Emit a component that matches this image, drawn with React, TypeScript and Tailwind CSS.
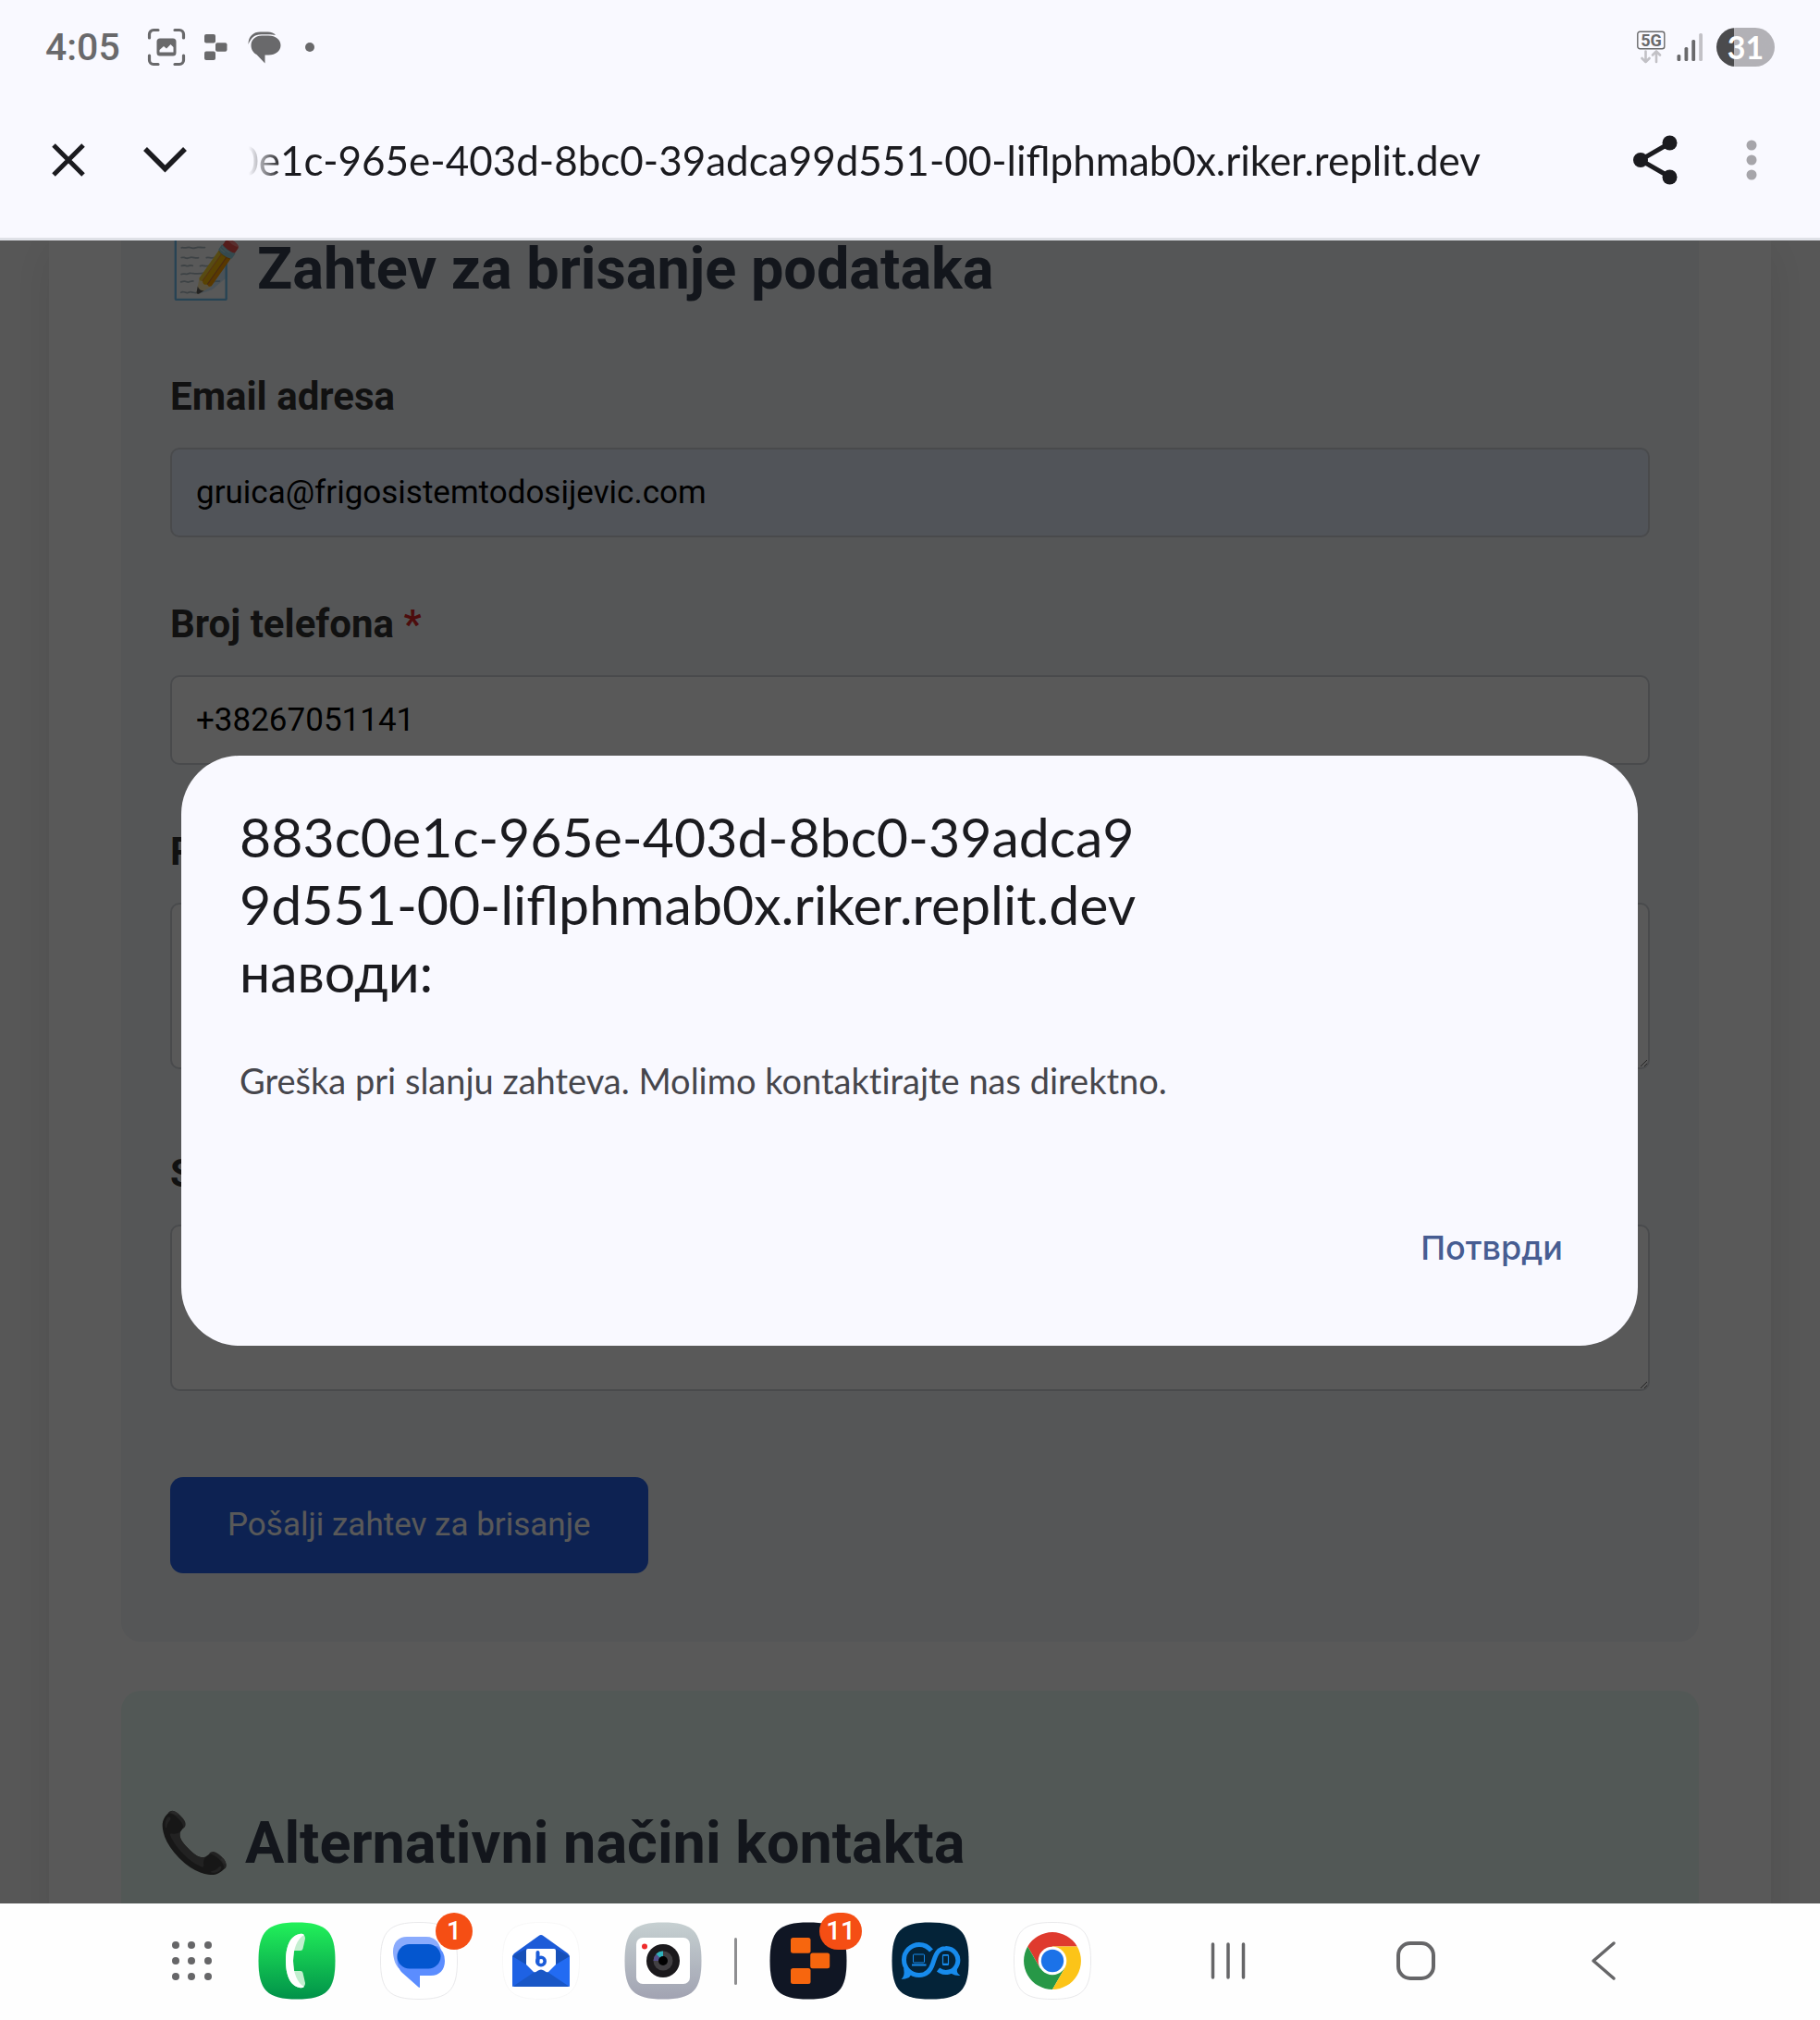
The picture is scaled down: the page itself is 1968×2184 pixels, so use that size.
import type { ReactNode } from "react";

const SQUIRCLE =
  "M42 .5C74 .5 83.500 10 83.500 42C83.500 74 74 83.500 42 83.500C10 83.500 .5 74 .5 42C.5 10 10 .5 42 .5Z";

function StatusBar() {
  return (
    <div className="flex h-[102px] items-center pr-[49px] pl-[49px] text-[#69696b]">
      <span className="font-[Roboto,sans-serif] text-[41px] leading-none font-medium">4:05</span>
      <svg className="ml-[29px] size-[42px]" viewBox="0 0 42 42" fill="none">
        <path
          d="M2.500 11V7A4.500 4.500 0 0 1 7 2.500H12M30 2.500H35A4.500 4.500 0 0 1 39.500 7V11M39.500 30V35A4.500 4.500 0 0 1 35 39.500H30M12 39.500H7A4.500 4.500 0 0 1 2.500 35V30"
          stroke="currentColor"
          strokeWidth="3.200"
          strokeLinecap="round"
        />
        <rect x="10.500" y="11.500" width="21" height="19" rx="3.500" fill="currentColor" />
        <path d="M13.500 26.500V24L18 20L21 22.500L25.500 18L28.500 21V26.500Z" fill="#f9f9ff" />
      </svg>
      <svg className="ml-[20px] h-[28px] w-[25px]" viewBox="0 0 25 28" fill="currentColor">
        <rect width="12" height="9.500" rx="2" />
        <rect x="12" y="9.300" width="12.500" height="9.500" rx="2" />
        <rect y="18.500" width="12" height="9.500" rx="2" />
      </svg>
      <svg className="ml-[22px] h-[35px] w-[36px]" viewBox="0 0 36 35" fill="currentColor">
        <path d="M15 4.500H22.500C30 4.500 35.500 9 35.500 15S30 25.500 22.500 25.500H18.500V34.500L9.500 25C5.500 23 3.500 19 3.500 15C3.500 9 8.500 4.500 15 4.500Z" />
        <path d="M.5 14C.5 5 6 .5 13.500 .5H21.500C25.500 .5 28.500 2 30 4C27 3 24 3.200 14.500 3.200C7 3.200 3.500 7 .5 14Z" />
      </svg>
      <span className="ml-[26px] size-[10px] rounded-full bg-current" />

      <svg className="ml-auto h-[36px] w-[31px]" viewBox="0 0 31 36" fill="none">
        <rect x=".8" y="1.300" width="29" height="18.500" rx="2.500" stroke="currentColor" strokeWidth="1.400" />
        <text
          x="15.500"
          y="17"
          textAnchor="middle"
          fontFamily="Roboto, sans-serif"
          fontSize="18"
          fontWeight="700"
          fill="currentColor"
        >
          5G
        </text>
        <path
          d="M9.500 22.500V34M5.500 30L9.500 34L13.500 30M21 34V22.500M17 26.500L21 22.500L25 26.500"
          stroke="#c2c1c6"
          strokeWidth="2.600"
          strokeLinecap="round"
          strokeLinejoin="round"
        />
      </svg>
      <svg className="ml-[12px] h-[30px] w-[29px]" viewBox="0 0 29 30" fill="currentColor">
        <rect x=".5" y="23" width="3.800" height="7" rx="1.500" />
        <rect x="8.500" y="15" width="3.800" height="15" rx="1.500" />
        <rect x="16.300" y="7" width="3.800" height="23" rx="1.500" />
        <rect x="24.200" width="3.800" height="30" rx="1.500" fill="#c2c1c6" />
      </svg>
      <span className="ml-[14px] flex h-[42px] w-[63px] items-center justify-center rounded-full bg-linear-to-r from-[#4b4b4d] from-30% to-[#b2b1b6] to-30% text-[34px] leading-none font-bold text-white">
        31
      </span>
    </div>
  );
}

function AddressBar() {
  return (
    <div className="flex h-[142px] items-center pr-[67px] pl-[56px] text-[#1b1b1f]">
      <button type="button" aria-label="Затвори" className="flex size-[36px]">
        <svg viewBox="0 0 36 36" fill="none" stroke="currentColor" strokeWidth="5">
          <path d="M2 2L34 34M34 2L2 34" />
        </svg>
      </button>
      <button type="button" aria-label="Умањи" className="ml-[63px] flex h-[28px] w-[47px]">
        <svg viewBox="0 0 47 28" fill="none" stroke="currentColor" strokeWidth="5.500">
          <path d="M2 2L23.500 23.500L45 2" />
        </svg>
      </button>
      <div className="ml-[66px] flex min-w-0 flex-1 justify-end overflow-hidden mask-l-from-[1296px] mask-l-to-[1332px]">
        <span className="text-[44px] leading-[60px] whitespace-nowrap">
          883c0e1c-965e-403d-8bc0-39adca99d551-00-liflphmab0x.riker.replit.dev
        </span>
      </div>
      <button type="button" aria-label="Дели" className="ml-[165px] flex h-[54px] w-[48px]">
        <svg viewBox="0 0 48 54" fill="currentColor">
          <path d="M40 8.500L8 27L40 45.500" fill="none" stroke="currentColor" strokeWidth="5" />
          <circle cx="39.500" cy="8.500" r="8" />
          <circle cx="8" cy="27" r="8" />
          <circle cx="39.500" cy="45.500" r="8" />
        </svg>
      </button>
      <button type="button" aria-label="Још опција" className="ml-[73px] flex h-[44px] w-[14px]">
        <svg viewBox="0 0 14 44" fill="#a6a5aa">
          <circle cx="7" cy="6" r="5.500" />
          <circle cx="7" cy="22" r="5.500" />
          <circle cx="7" cy="38" r="5.500" />
        </svg>
      </button>
    </div>
  );
}

const labelClass = "mb-[22px] block text-[42px] leading-[67px] font-bold text-[#333333]";
const inputClass =
  "mb-[60px] block h-[97px] w-full rounded-[10px] border-2 border-[#d1d5db] px-[26px] text-[35px] text-black";
const areaClass =
  "block h-[180px] w-full rounded-[10px] border-2 border-[#d1d5db] bg-white px-[26px] py-[20px] text-[35px] text-black";
const headingClass = "text-[63px] leading-[62px] font-bold text-[#374151]";

function DeletionPage() {
  return (
    <div className="bg-[#fafafa] px-[53px] font-[Roboto,'Noto_Color_Emoji',sans-serif]">
      <div className="bg-white px-[78px] shadow-[0_5px_50px_rgba(0,0,0,0.1)]">
        <section className="rounded-b-[21px] bg-[#f3f6f9] px-[53px] pb-[74px]">
          <h2 className={`${headingClass} mb-[73px]`}>📝 Zahtev za brisanje podataka</h2>
          <form onSubmit={(e) => e.preventDefault()}>
            <label htmlFor="email" className={labelClass}>
              Email adresa
            </label>
            <input
              id="email"
              type="email"
              defaultValue="gruica@frigosistemtodosijevic.com"
              className={`${inputClass} bg-[#e8f0fe]`}
            />
            <label htmlFor="phone" className={labelClass}>
              Broj telefona <span className="text-[#dc2626]">*</span>
            </label>
            <input id="phone" type="tel" defaultValue="+38267051141" className={`${inputClass} bg-white`} />
            <label htmlFor="reason" className={labelClass}>
              Razlog
            </label>
            <textarea id="reason" className={`${areaClass} mb-[79px]`} />
            <label htmlFor="details" className={labelClass}>
              Stavke
            </label>
            <textarea id="details" className={`${areaClass} mb-[93px]`} />
            <button
              type="submit"
              className="h-[104px] rounded-[14px] bg-[#2563eb] px-[62px] text-[35px] text-white"
            >
              Pošalji zahtev za brisanje
            </button>
          </form>
        </section>
        <section className="mt-[53px] rounded-t-[21px] bg-[#ecfdf5] px-[40px] pt-[134px] pb-[80px]">
          <h2 className={headingClass}>📞 Alternativni načini kontakta</h2>
        </section>
      </div>
    </div>
  );
}

function AlertDialog() {
  return (
    <div className="absolute inset-0 flex items-center bg-black/65 pr-[197px] pb-[46px] pl-[196px]">
      <div
        role="alertdialog"
        aria-labelledby="alert-title"
        aria-describedby="alert-text"
        className="flex w-full flex-col rounded-[63px] bg-[#f9f9ff] px-[63px] pt-[51px] pb-[61px]"
      >
        <h1 id="alert-title" className="text-[59px] leading-[73px] text-[#1b1b1f]">
          883c0e1c-965e-403d-8bc0-39adca9
          <br />
          9d551-00-liflphmab0x.riker.replit.dev
          <br />
          наводи:
        </h1>
        <p
          id="alert-text"
          className="mt-[55px] text-[38px] leading-[52px] text-[#46464c] [font-variant-ligatures:none]"
        >
          Greška pri slanju zahteva. Molimo kontaktirajte nas direktno.
        </p>
        <button
          type="button"
          className="mt-[110px] mr-[18px] h-[90px] self-end font-[Inter,sans-serif] text-[36px] leading-[52px] font-medium text-[#475d92]"
        >
          Потврди
        </button>
      </div>
    </div>
  );
}

function AppButton({ label, badge, children }: { label: string; badge?: string; children: ReactNode }) {
  return (
    <button type="button" aria-label={label} className="relative size-[84px] shrink-0">
      <svg className="size-[84px]" viewBox="0 0 84 84" fill="none">
        {children}
      </svg>
      {badge && (
        <span className="absolute -top-[10px] -right-[16px] flex h-[40px] min-w-[40px] items-center justify-center rounded-full bg-[#f54e14] px-[7px] font-[Roboto,sans-serif] text-[28px] leading-none font-medium text-white">
          {badge}
        </span>
      )}
    </button>
  );
}

function Taskbar() {
  return (
    <nav className="flex h-[126px] shrink-0 items-center bg-[#fefefe] pr-[212px] pb-[2px] pl-[186px]">
      <button type="button" aria-label="Апликације" className="grid size-[43px] grid-cols-3 gap-[9px]">
        {Array.from({ length: 9 }, (_, i) => (
          <span key={i} className="size-[8px] rounded-full bg-[#666668]" />
        ))}
      </button>
      <div className="ml-[50px] flex items-center gap-[48px]">
        <AppButton label="Телефон">
          <defs>
            <linearGradient id="call" x1="0" y1="0" x2="0" y2="1">
              <stop stopColor="#22f15a" />
              <stop offset="1" stopColor="#019149" />
            </linearGradient>
          </defs>
          <path d={SQUIRCLE} fill="url(#call)" />
          <path
            d="M45 13C49 12 51 15 51 18L48.500 29Q48 31 46 31H39L38 42L39 53H46Q48 53 48.500 55L51 66C51 69 49 72 45 71C34 69 30 56 30 42C30 28 34 15 45 13Z"
            fill="#c3efd0"
          />
          <path
            d="M45 13Q48 12 50 14C42 18 38 30 38 42C38 54 42 66 50 70Q48 72 45 71C34 69 30 56 30 42C30 28 34 15 45 13Z"
            fill="#fff"
          />
        </AppButton>
        <AppButton label="Поруке" badge="1">
          <path d={SQUIRCLE} fill="#fff" stroke="#e9e9eb" />
          <path d="M29 16H50C60 16 66 24 66 34L52 50H20C16 46 14 38 14 32C14 22 20 16 29 16Z" fill="#8aabfd" />
          <path d="M62 26Q70 32 70 42C70 52 64 58 55 58H43V70Q43 72 41 70L24 55C20 51 18 46 18.500 38Z" fill="#5b8dff" />
          <rect x="18.500" y="24" width="47" height="26.500" rx="13.250" fill="#0456cf" />
        </AppButton>
        <AppButton label="Пошта">
          <path d={SQUIRCLE} fill="#fff" stroke="#f8f8f8" />
          <path d="M11 38Q11 36 13 34L39.500 15Q42 13 44.500 15L71 34Q73 36 73 38V67Q73 70 70 70H14Q11 70 11 67Z" fill="#1c5bd8" />
          <path d="M11 37L42 55L11 70Z" fill="#1e62e4" />
          <path d="M73 37L42 55L73 70Z" fill="#226bf2" />
          <path d="M11 37L26 29V46ZM73 37L58 29V46Z" fill="#1650b8" />
          <path d="M12 69.500L38 52Q42 50 46 52L72 69.500Q71 70 70 70H14Z" fill="#1957c6" />
          <path d="M26 31Q26 29 28 29H56Q58 29 58 31V46L50 54Q48 55 46 53Q42 50 38 53Q36 55 34 54L26 46Z" fill="#fff" />
          <line x1="38.500" y1="33" x2="38.500" y2="43" stroke="#1b5bd8" strokeWidth="4" strokeLinecap="round" />
          <circle cx="42" cy="42.500" r="4.200" stroke="#1b5bd8" strokeWidth="3.600" />
        </AppButton>
        <AppButton label="Камера">
          <defs>
            <linearGradient id="cam" x1="0" y1="0" x2="0" y2="1">
              <stop stopColor="#c6d0d1" />
              <stop offset="1" stopColor="#a1a3b2" />
            </linearGradient>
          </defs>
          <path d={SQUIRCLE} fill="url(#cam)" />
          <rect x="13" y="17" width="58" height="50" rx="7" fill="#fff" />
          <circle cx="22" cy="26.500" r="3" fill="#ee2b2b" />
          <circle cx="42" cy="42" r="18" fill="#1b191c" />
          <circle cx="42" cy="42" r="10.500" fill="#424043" />
          <path d="M42 42L31.500 42A10.500 10.500 0 0 1 34.500 34.700Z" fill="#55508a" />
          <path d="M42 42L34.500 34.700A10.500 10.500 0 0 1 42 31.500Z" fill="#2fb3bd" />
          <circle cx="42" cy="42" r="5" fill="#000" />
        </AppButton>
      </div>
      <span className="mx-[35px] h-[51px] w-[3px] rounded-full bg-[#8e8e90]" />
      <div className="flex items-center gap-[48px]">
        <AppButton label="Replit" badge="11">
          <path d={SQUIRCLE} fill="#101624" />
          <g fill="#f7660e">
            <rect x="23" y="17" width="21.500" height="16.700" rx="2.500" />
            <rect x="44.200" y="33.500" width="21" height="16.700" rx="2.500" />
            <rect x="23" y="50" width="21.500" height="17" rx="2.500" />
          </g>
        </AppButton>
        <AppButton label="Сервис">
          <path d={SQUIRCLE} fill="#042338" />
          <path
            d="M43 31C39 26 34 24.500 30 24.500A16.500 16.500 0 0 0 30 57.500C38 57.500 42 53 44.500 45.500C47.500 36 50 28.500 58.500 28.500A13 13 0 1 1 50.500 51.500"
            stroke="#178bec"
            strokeWidth="5"
          />
          <path d="M13 50L22 56L19 60Q15 62 10.500 62Q15 58 13 50ZM69 49L62 54.500L65 56Q69 58.500 74.500 58Q70 55 71 51Z" fill="#178bec" />
          <rect x="23.500" y="35" width="12" height="9" rx="1" stroke="#178bec" />
          <path d="M22 45.500H37.500V47.500H22Z" fill="#178bec" />
          <rect x="55.500" y="35.500" width="6" height="11" rx="1" stroke="#178bec" strokeWidth="1.200" />
          <path d="M55.500 36H61.500M55.500 45.500H61.500" stroke="#178bec" strokeWidth="1.500" />
        </AppButton>
        <AppButton label="Chrome">
          <path d={SQUIRCLE} fill="#fff" stroke="#e9e9eb" />
          <path d="M15.200 26.500A31 31 0 0 1 68.800 26.500L42 26.500L28.600 49.750Z" fill="#df3a2e" />
          <path d="M15.200 26.500L28.600 49.750H55.400L42 73A31 31 0 0 1 15.200 26.500Z" fill="#279847" />
          <path d="M68.800 26.500A31 31 0 0 1 42 73L55.400 49.750L42 42V26.500Z" fill="#fcc418" />
          <circle cx="42" cy="42" r="15.300" fill="#fff" />
          <circle cx="42" cy="42" r="12.200" fill="#1b72e8" />
        </AppButton>
      </div>
      <div className="ml-auto flex w-[450px] items-center justify-between text-[#666668]">
        <button type="button" aria-label="Недавно" className="flex size-[44px]">
          <svg viewBox="0 0 44 44" fill="none" stroke="currentColor" strokeWidth="3.500" strokeLinecap="round">
            <path d="M5.500 4V40M22 4V40M38.500 4V40" />
          </svg>
        </button>
        <button type="button" aria-label="Почетна" className="flex size-[44px]">
          <svg viewBox="0 0 44 44" fill="none" stroke="currentColor" strokeWidth="4">
            <rect x="3" y="3" width="38" height="38" rx="13" />
          </svg>
        </button>
        <button type="button" aria-label="Назад" className="flex size-[44px]">
          <svg
            viewBox="0 0 44 44"
            fill="none"
            stroke="currentColor"
            strokeWidth="3.500"
            strokeLinecap="round"
            strokeLinejoin="round"
          >
            <path d="M33 3L11 22L33 41" />
          </svg>
        </button>
      </div>
    </nav>
  );
}

export default function App() {
  return (
    <div className="flex h-screen flex-col bg-[#f9f9ff] font-[Lato,sans-serif]">
      <header className="border-b-[3px] border-[#dfe1e7] pb-[13px]">
        <StatusBar />
        <AddressBar />
      </header>
      <main className="relative min-h-0 flex-1 overflow-hidden">
        <DeletionPage />
        <AlertDialog />
      </main>
      <Taskbar />
    </div>
  );
}
